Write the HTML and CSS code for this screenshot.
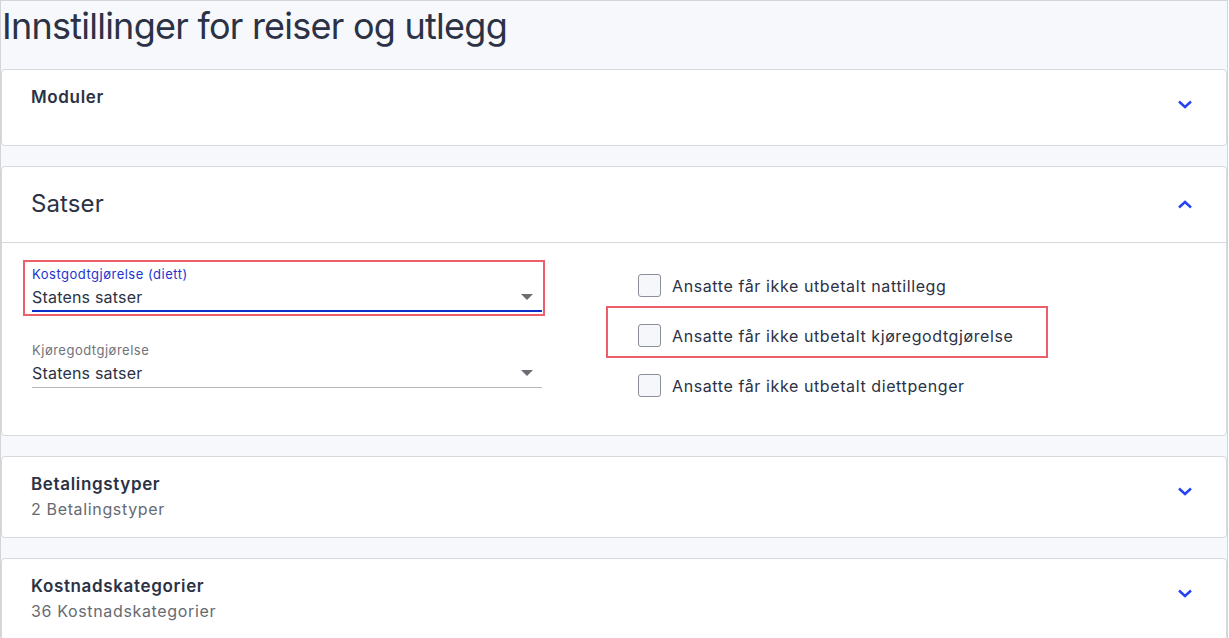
FILE: index.html
```html
<!DOCTYPE html>
<html lang="no">
<head>
<meta charset="utf-8">
<title>Innstillinger for reiser og utlegg</title>
<link rel="stylesheet" href="styles.css">
</head>
<body>
<div class="page">
  <h1 class="title">Innstillinger for reiser og utlegg</h1>

  <section class="card">
    <div class="card-head card-head--modules">
      <div class="head-text"><div class="card-title">Moduler</div></div>
      <svg class="chev" width="16" height="9" viewBox="0 0 16 9"><path d="M2 1.5 L8 7 L14 1.5" fill="none" stroke="#2442f2" stroke-width="2.4"/></svg>
    </div>
  </section>

  <section class="card">
    <div class="card-head card-head--open">
      <div class="head-big">Satser</div>
      <svg class="chev" width="16" height="9" viewBox="0 0 16 9"><path d="M2 7.5 L8 2 L14 7.5" fill="none" stroke="#2442f2" stroke-width="2.4"/></svg>
    </div>
    <div class="card-body">
      <div class="fields">
        <div class="field field--focus">
          <div class="field-label">Kostgodtgjørelse (diett)</div>
          <div class="field-value"><span>Statens satser</span><span class="caret"></span></div>
          <div class="highlight highlight--field"></div>
        </div>
        <div class="field">
          <div class="field-label">Kjøregodtgjørelse</div>
          <div class="field-value"><span>Statens satser</span><span class="caret"></span></div>
        </div>
      </div>
      <div class="checks">
        <label class="check"><span class="box"></span><span>Ansatte får ikke utbetalt nattillegg</span></label>
        <label class="check"><span class="box"></span><span>Ansatte får ikke utbetalt kjøregodtgjørelse</span><span class="highlight highlight--check"></span></label>
        <label class="check"><span class="box"></span><span>Ansatte får ikke utbetalt diettpenger</span></label>
      </div>
    </div>
  </section>

  <section class="card">
    <div class="card-head card-head--sub">
      <div class="head-text">
        <div class="card-title">Betalingstyper</div>
        <div class="card-sub">2 Betalingstyper</div>
      </div>
      <svg class="chev chev--raised" width="16" height="9" viewBox="0 0 16 9"><path d="M2 1.5 L8 7 L14 1.5" fill="none" stroke="#2442f2" stroke-width="2.4"/></svg>
    </div>
  </section>

  <section class="card">
    <div class="card-head card-head--sub">
      <div class="head-text">
        <div class="card-title">Kostnadskategorier</div>
        <div class="card-sub">36 Kostnadskategorier</div>
      </div>
      <svg class="chev chev--raised" width="16" height="9" viewBox="0 0 16 9"><path d="M2 1.5 L8 7 L14 1.5" fill="none" stroke="#2442f2" stroke-width="2.4"/></svg>
    </div>
  </section>
</div>
</body>
</html>
```

FILE: styles.css
```css
* { box-sizing: border-box; }
html, body { margin: 0; padding: 0; }
body {
  width: 1229px;
  height: 638px;
  overflow: hidden;
  font-family: Inter, "Open Sans", "Liberation Sans", sans-serif;
  color: #2b3245;
  background: #ffffff;
}
.page {
  width: 1228px;
  height: 638px;
  border: 1px solid #d2d4d8;
  border-bottom: none;
  background: #f6f8fb;
  padding: 3px 0 0 0;
  display: flex;
  flex-direction: column;
  gap: 20px;
  overflow: hidden;
}
.title {
  margin: 0 0 1px 1px;
  font-size: 36px;
  line-height: 44px;
  font-weight: 400;
  color: #2b3245;
  letter-spacing: -0.75px;
}
.card {
  background: #fff;
  border: 1px solid #d6d8dc;
  border-radius: 4px;
  flex-shrink: 0;
}
.card-head {
  display: flex;
  align-items: center;
  justify-content: space-between;
  padding: 17px 33px 17px 29px;
}
.card-head--sub {
  padding-bottom: 18px;
}
.card-head--modules {
  padding-top: 17px;
  padding-bottom: 36px;
  align-items: flex-start;
}
.card-head--modules .chev { margin-top: 13px; }
.card-head--open {
  padding: 22px 33px 23px 29px;
  border-bottom: 1px solid #d6d8dc;
}
.head-big {
  font-size: 24px;
  line-height: 30px;
  color: #2b3245;
  letter-spacing: 0.1px;
}
.card-title {
  font-size: 17px;
  line-height: 20px;
  font-weight: 600;
  color: #2b3245;
  letter-spacing: 0.65px;
}
.card-sub {
  margin-top: 5px;
  font-size: 16px;
  line-height: 20px;
  color: #666a72;
  letter-spacing: 0.65px;
}
.chev { display: block; flex-shrink: 0; }
.chev--raised { margin-bottom: 10px; }

.card-body {
  display: flex;
  align-items: flex-start;
  gap: 96px;
  padding: 23px 30px 38px 30px;
}
.fields {
  width: 510px;
  display: flex;
  flex-direction: column;
  gap: 30px;
}
.field {
  position: relative;
  border-bottom: 1px solid #b5b7bb;
  padding-bottom: 4px;
}
.field--focus {
  border-bottom: 2px solid #0b2fc7;
  padding-bottom: 3px;
}
.field-label {
  font-size: 13px;
  line-height: 16px;
  color: #70737a;
  letter-spacing: 0.5px;
}
.field--focus .field-label { color: #1e34cf; }
.field-value {
  margin-top: 5px;
  display: flex;
  align-items: center;
  justify-content: space-between;
  font-size: 16px;
  line-height: 20px;
  color: #2b3245;
  letter-spacing: 0.2px;
}
.caret {
  width: 0;
  height: 0;
  border-left: 6px solid transparent;
  border-right: 6px solid transparent;
  border-top: 6px solid #6b6d72;
  margin-right: 9px;
}
.highlight {
  position: absolute;
  border: 2px solid #ea5f6b;
  pointer-events: none;
}
.highlight--field {
  top: -6px;
  left: -9px;
  width: 522px;
  bottom: -6px;
}
.checks {
  display: flex;
  flex-direction: column;
  gap: 27px;
  padding-top: 8px;
}
.check {
  position: relative;
  display: flex;
  align-items: center;
  gap: 11px;
  font-size: 16px;
  line-height: 22px;
  color: #2b3245;
  letter-spacing: 0.6px;
}
.box {
  width: 23px;
  height: 23px;
  border: 1px solid #8b8f99;
  border-radius: 3px;
  background: #f5f7fb;
  flex-shrink: 0;
}
.highlight--check {
  top: -18px;
  left: -32px;
  width: 442px;
  height: 52px;
}
```
